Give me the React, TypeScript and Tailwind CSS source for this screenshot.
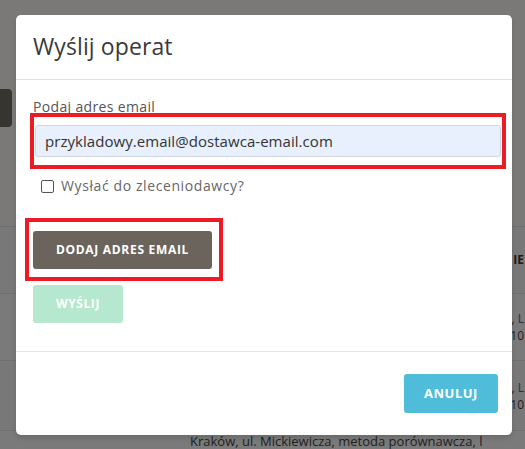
import React from "react";

const font = { fontFamily: '"Open Sans", "Liberation Sans", sans-serif' };

function BackgroundPage() {
  return (
    <div className="flex flex-col w-full h-full">
      {/* górny pasek z przyciskiem */}
      <div className="h-[226px] bg-[#7a7977] pt-[89px]">
        <div className="w-[12px] h-[38px] bg-[#373530] rounded-r-[4px]" />
      </div>
      <div className="h-[67px] border-t border-[#6f6f6f] bg-[#787878] flex justify-end items-center pr-[1px]">
        <span className="text-[12px] font-bold text-[#1c1c1c]">IE</span>
      </div>
      <div className="h-[67px] border-t border-[#6f6f6f] bg-[#7a7a7a] flex flex-col justify-center items-end pr-[1px] text-[12px] text-[#1f1f1f] leading-[17px]">
        <span>, <span className="text-[#1d3550]">L</span></span>
        <span>10</span>
      </div>
      <div className="h-[70px] border-t border-[#6f6f6f] bg-[#787878] flex flex-col justify-center items-end pr-[1px] text-[12px] text-[#1f1f1f] leading-[17px]">
        <span>, <span className="text-[#1d3550]">L</span></span>
        <span>10</span>
      </div>
      <div className="flex-1 border-t border-[#6f6f6f] bg-[#7a7a7a] pl-[190px] pt-[2px] text-[13px] leading-[16px] text-[#1f1f1f] whitespace-nowrap">
        Kraków, ul. Mickiewicza, metoda porównawcza, l
      </div>
    </div>
  );
}

export default function App() {
  return (
    <div className="relative w-[525px] h-[449px] overflow-hidden" style={font}>
      <BackgroundPage />

      {/* Modal */}
      <div className="absolute left-[16px] top-[15px] w-[496px] h-[420px] bg-white rounded-[5px] shadow-md flex flex-col">
        <div className="h-[65px] border-b border-[#dee2e6] px-[17px] flex items-center">
          <h2 className="text-[23px] text-[#3a3a3a] font-normal tracking-[0.1px] -mt-[2px]">Wyślij operat</h2>
        </div>

        <div className="flex-1 px-[17px] pt-[18px] flex flex-col">
          <label className="text-[14px] text-[#555] leading-[18px] tracking-[0.35px]">Podaj adres email</label>
          <div className="-mx-[3px] border-[4px] border-[#ed1c24] px-[1px] pt-[8px] pb-[8px] mt-[-3px] mr-[-11px]">
            <div className="h-[32px] bg-[#e8f0fe] border border-[#d0d7e2] rounded-[3px] flex items-center px-[9px] text-[15px] text-[#333] tracking-[0.05px]">
              przykladowy.email@dostawca-email.com
            </div>
          </div>

          <div className="flex items-center gap-[7px] mt-[7px] ml-[8px]">
            <span className="w-[13px] h-[13px] border border-[#555] rounded-[2px] bg-white" />
            <span className="text-[14px] text-[#666] tracking-[0.6px] -mt-[1px]">Wysłać do zleceniodawcy?</span>
          </div>

          <div className="mt-[22px] -ml-[8px] w-[198px] border-[4px] border-[#ed1c24] pl-[4px] pt-[9px] pb-[8px]">
            <button className="w-[179px] h-[38px] bg-[#6b645c] rounded-[3px] text-white text-[12px] font-bold tracking-[0.7px]">
              DODAJ ADRES EMAIL
            </button>
          </div>

          <button className="mt-[4px] w-[90px] h-[38px] bg-[#b5e8cf] rounded-[3px] text-white text-[12px] font-bold tracking-[0.6px]">
            WYŚLIJ
          </button>
        </div>

        <div className="h-[84px] border-t border-[#e5e5e5] flex justify-end items-start pt-[22px] pr-[14px]">
          <button className="w-[94px] h-[39px] bg-[#4fbcd9] rounded-[3px] text-white text-[13px] font-bold tracking-[0.5px]">
            ANULUJ
          </button>
        </div>
      </div>
    </div>
  );
}
